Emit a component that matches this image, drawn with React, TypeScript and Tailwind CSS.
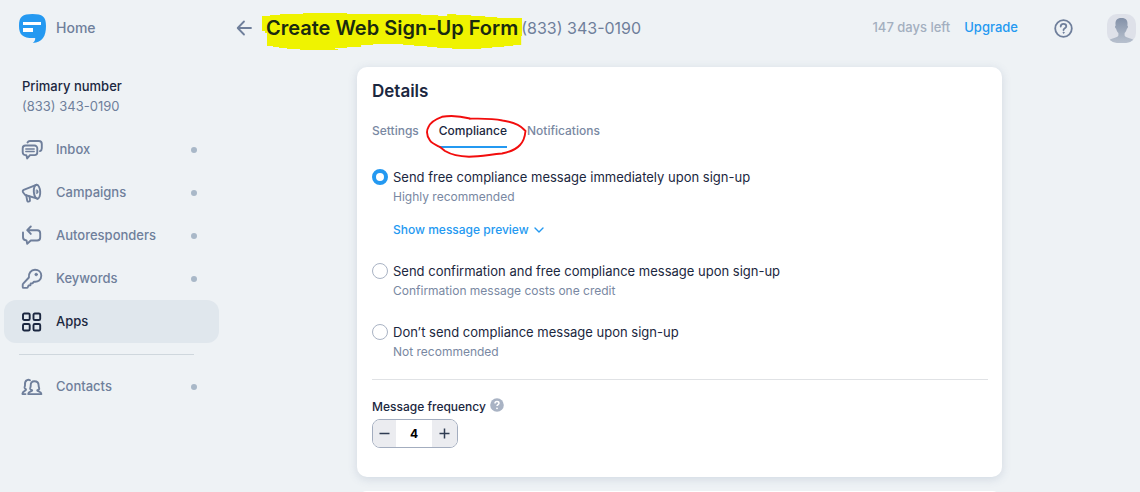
import { useState } from "react";
import type { ReactNode } from "react";

function Icon({ children }: { children: ReactNode }) {
  return (
    <svg
      viewBox="0 0 24 24"
      className="size-6 shrink-0"
      fill="none"
      stroke="currentColor"
      strokeWidth="1.9"
      strokeLinecap="round"
      strokeLinejoin="round"
      aria-hidden="true"
    >
      {children}
    </svg>
  );
}

const icons = {
  inbox: (
    <Icon>
      <path d="M5.5 7.5h9a2.800 2.800 0 0 1 2.800 2.800v4a2.800 2.800 0 0 1-2.800 2.800H10l-2.800 3.400-.9-3.400h-.8a2.800 2.800 0 0 1-2.800-2.800v-4a2.800 2.800 0 0 1 2.800-2.800Z" />
      <path d="M5.800 11h8.400M5.800 13.500h8.400" strokeWidth="1.400" />
      <path d="M7.500 4.500C8 3.500 8.900 3 10 3h8.800a3 3 0 0 1 3 3v4.200c0 1.500-.7 2.500-1.800 2.900" />
    </Icon>
  ),
  campaigns: (
    <Icon>
      <ellipse cx="17" cy="10.700" rx="3.200" ry="7" transform="rotate(-4 17 10.700)" />
      <path d="M16.300 3.800 3.700 8.800c-1.100.5-1.200 1.800-.5 2.700l2 2.500 12.300 3.700" />
      <path d="m6.200 14.300 1 5.300c.2 1 .9 1.200 1.700 1 .9-.2 1.300-.8 1.100-1.700l-.6-3.500" />
      <path d="M16.500 8.800c1.200 0 1.700.8 1.700 1.900s-.5 1.900-1.700 1.900Z" fill="currentColor" strokeWidth="0.600" />
    </Icon>
  ),
  autoresponders: (
    <Icon>
      <path d="M10.800 2.500 7.200 6.200l3.600 3.700M7.500 6.200h9.700a3 3 0 0 1 3 3v4.300a3 3 0 0 1-3 3h-6.400l-3.600 3.300-.7-3.400C4.300 16.300 3 15.300 3 13.300V8.500" />
    </Icon>
  ),
  keywords: (
    <Icon>
      <path d="M8.900 10.500C8.300 6.200 11 2.800 15 2.800c3.700 0 6.300 2.600 6.300 6 0 4-3.300 6.400-7.300 5.800l-1.300 1.600-2 .2-.3 2-1.900.1-.6 1.500c-.2.700-.6.900-1.200.9H3.600c-.7 0-.9-.4-.9-1v-2c0-.5.100-.8.500-1.200Z" />
      <circle cx="16.200" cy="7.500" r="1.300" fill="currentColor" strokeWidth="0.800" />
    </Icon>
  ),
  apps: (
    <Icon>
      <rect x="3" y="3.500" width="6.700" height="6.500" rx="1.300" />
      <rect x="13.500" y="3.500" width="6.700" height="6.500" rx="1.300" />
      <rect x="3" y="14" width="6.700" height="6.500" rx="1.300" />
      <rect x="13.500" y="14" width="6.700" height="6.500" rx="1.300" />
    </Icon>
  ),
  contacts: (
    <Icon>
      <path d="M10 5.200C9 4.600 8 4.600 7 5.100 5 6 4.800 8 5 10c.1 1.400-.8 2.100-.3 3.100.5.900 1.300.7 1.300 1.600 0 1.200-3.200 1.200-3.500 3.700v.700h3" />
      <path d="M14.300 6.200c-2.400 0-3.700 1.600-3.600 4 .1 1.900-.8 2.800-.5 3.800.3.900 2 .7 2 1.400 0 1.200-4 1.100-4 3.700h13.200c0-2.600-4.200-2.500-4.200-3.700 0-.7 1.600-.5 2-1.400.3-1-.6-1.900-.6-3.800 0-2.400-1.800-4-4.300-4Z" />
    </Icon>
  ),
};

const navItems = [
  { label: "Inbox", icon: icons.inbox },
  { label: "Campaigns", icon: icons.campaigns },
  { label: "Autoresponders", icon: icons.autoresponders },
  { label: "Keywords", icon: icons.keywords },
  { label: "Apps", icon: icons.apps, active: true },
];

function NavItem({ label, icon, active }: { label: string; icon: ReactNode; active?: boolean }) {
  return (
    <a
      href="#"
      aria-current={active ? "page" : undefined}
      className={
        active
          ? "flex h-[43px] items-center gap-3 rounded-xl bg-[#e0e7ed] pr-[22px] pl-4 text-[13px] font-medium text-[#1b2740]"
          : "flex h-[43px] items-center gap-3 rounded-xl pr-[22px] pl-4 text-[13px] font-medium text-[#6f7f9b]"
      }
    >
      {icon}
      <span className="flex-1">{label}</span>
      {!active && <span className="size-[6px] rounded-full bg-[#a9b8c8]" />}
    </a>
  );
}

function Logo() {
  return (
    <svg viewBox="0 0 27 29" className="h-[29px] w-[27px] shrink-0" aria-hidden="true">
      <path
        d="M13.500 0C23.500 0 27 2.500 27 12c0 10-3.500 16.500-13.300 17 1.900-1.300 2.600-2.900 2.500-5C4.500 24.500 0 21.500 0 12 0 2.500 3.500 0 13.500 0Z"
        fill="#2499f1"
      />
      <path d="M4 8h18v3H4zM4 14h10v4H4z" fill="#fff" />
    </svg>
  );
}

function Sidebar() {
  return (
    <aside className="w-[219px] shrink-0 pl-1">
      <a href="#" className="flex h-14 items-center gap-[10px] pl-[15px] text-sm font-medium text-[#6f7f9b]">
        <Logo />
        Home
      </a>
      <div className="mt-5 pl-[18px] text-[13px] leading-5">
        <p className="font-medium text-[#1b2740]">Primary number</p>
        <p className="text-[#6f7f9b]">(833) 343-0190</p>
      </div>
      <nav aria-label="Main" className="mt-3">
        {navItems.map((item) => (
          <NavItem key={item.label} {...item} />
        ))}
        <hr className="mt-[11px] mr-[25px] mb-[10px] ml-[15px] border-[#cfd7dd]" />
        <NavItem label="Contacts" icon={icons.contacts} />
      </nav>
    </aside>
  );
}

function Header() {
  return (
    <header className="flex h-14 items-center justify-between pr-1 pl-[17px]">
      <div className="flex items-center">
        <button type="button" aria-label="Back" className="mr-[14px] text-[#6f7f9b]">
          <svg viewBox="0 0 16 16" className="size-4" fill="none" stroke="currentColor" strokeWidth="1.800" strokeLinecap="round" strokeLinejoin="round">
            <path d="M8 1.500 1.700 8 8 14.500M2 8h13" />
          </svg>
        </button>
        <h1 className="relative isolate mr-[3px] text-xl leading-7 font-semibold whitespace-nowrap text-[#1a2a10]">
          <svg
            viewBox="0 0 260 37"
            preserveAspectRatio="none"
            className="absolute -top-px -right-1 -left-1 -z-10 h-[37px] w-[calc(100%+8px)]"
            aria-hidden="true"
          >
            <path
              d="M0 3h8V2h10V1h23V0h44v1h74v1h17v1h9V1h9v1h15v1h14v1h12v1h25v18h-1v9h-8v1h-9v1h-12v1h-11v1h-29v-1h-15v-1h-10v-1h-13v-1h-11v-1h-30v1h-12v2h-14v1h-12v1H76v1H38v-1H25v-1h-8v-1h-6v-1H5V20H3v-2H0Z"
              fill="#eff300"
            />
          </svg>
          Create Web Sign-Up Form
        </h1>
        <span className="text-base whitespace-nowrap text-[#6f7f9b]">(833) 343-0190</span>
      </div>
      <div className="flex items-center text-[13px] font-medium">
        <span className="mr-[14px] text-[#a3afbf]">147 days left</span>
        <a href="#" className="mr-9 text-[#2499f1]">
          Upgrade
        </a>
        <button type="button" aria-label="Help" className="mr-[34px] text-[#6f7f9b]">
          <svg viewBox="0 0 19 19" className="size-[19px]" fill="none" stroke="currentColor" strokeWidth="1.800" strokeLinecap="round">
            <circle cx="9.500" cy="9.500" r="8.300" />
            <path d="M6.700 7.600c0-1.700 1.200-2.700 2.800-2.700s2.800.9 2.800 2.400c0 1.900-2.800 1.900-2.800 3.700" />
            <circle cx="9.500" cy="13.700" r="0.500" fill="currentColor" strokeWidth="1" />
          </svg>
        </button>
        <button type="button" aria-label="Account" className="overflow-hidden rounded-[10px] bg-[#dee1e9]">
          <svg viewBox="0 0 29 29" className="size-[29px]">
            <defs>
              <linearGradient id="avatar" x1="0" y1="0" x2="0" y2="1">
                <stop offset="0" stopColor="#8391a8" />
                <stop offset="1" stopColor="#b8c1ce" />
              </linearGradient>
            </defs>
            <path
              d="M14.500 4c4.800 0 6.200 2.500 6 6.500l-.2 1c1 .2.900 2.500-.4 3.300-.4 2-1.300 3.200-2.300 4.200v2.300c0 2.200 6.300 2.700 9 4.700V29H2.400v-3c2.700-2 9-2.500 9-4.700V19c-1-1-1.900-2.200-2.300-4.200-1.300-.8-1.400-3.100-.4-3.300l-.2-1C8.300 6.500 9.700 4 14.500 4Z"
              fill="url(#avatar)"
            />
          </svg>
        </button>
      </div>
    </header>
  );
}

const tabs = ["Settings", "Compliance", "Notifications"];

function Tabs() {
  return (
    <div role="tablist" className="mt-5 flex gap-5 text-xs leading-4 font-medium">
      {tabs.map((tab) =>
        tab === "Compliance" ? (
          <button
            key={tab}
            type="button"
            role="tab"
            aria-selected="true"
            className="relative border-b-2 border-[#2499f1] pb-[7px] text-[#1b2740]"
          >
            {tab}
            <svg
              viewBox="0 0 101 44"
              className="absolute -top-[9px] -left-[13px] h-[44px] w-[101px] max-w-none"
              fill="none"
              stroke="#f20d0d"
              strokeWidth="1.900"
              strokeLinejoin="round"
              aria-hidden="true"
            >
              <path d="M44 4.500C35 2.200 24 1.300 16 2.800 10 5 4 9 2.500 13 0 17 1 22 4 26.500c2 3 6 4.500 10 6.500l5 4c6 3.500 15 5.500 24 5.700 12-.2 20-2 33-3.200 8-1.500 14-4 18-8.500 3-3 5-9 5.500-14l-1-1c-4-4.500-12-8-22-9.500C65 4 54 4.500 43 4.700" />
            </svg>
          </button>
        ) : (
          <button
            key={tab}
            type="button"
            role="tab"
            aria-selected="false"
            className="border-b-2 border-transparent pb-[7px] text-[#7988a2]"
          >
            {tab}
          </button>
        )
      )}
    </div>
  );
}

const options = [
  {
    id: "immediate",
    label: "Send free compliance message immediately upon sign-up",
    note: "Highly recommended",
    preview: true,
  },
  {
    id: "confirm",
    label: "Send confirmation and free compliance message upon sign-up",
    note: "Confirmation message costs one credit",
  },
  { id: "none", label: "Don’t send compliance message upon sign-up", note: "Not recommended" },
];

export default function App() {
  const [choice, setChoice] = useState("immediate");
  const [frequency, setFrequency] = useState(4);

  return (
    <div className="flex h-screen overflow-hidden bg-[#eef2f5] font-['Inter',sans-serif] text-[#1b2740]">
      <Sidebar />
      <div className="min-w-0 flex-1">
        <Header />
        <main className="mx-auto mt-[11px] max-w-[645px]">
          <section className="rounded-[10px] bg-white pt-3 pr-[14px] pb-[29px] pl-[15px] shadow-[0_2px_10px_rgba(80,100,140,0.18)]">
            <h2 className="text-[17px] leading-6 font-semibold">Details</h2>
            <Tabs />
            <fieldset aria-label="Compliance message" className="mt-[19px] flex flex-col gap-[23px]">
              {options.map((o) => (
                <div key={o.id} className="flex gap-[5px]">
                  <input
                    id={o.id}
                    type="radio"
                    name="compliance"
                    checked={choice === o.id}
                    onChange={() => setChoice(o.id)}
                    className="mt-[2px] size-4 shrink-0 appearance-none rounded-full border border-[#a9b3c4] bg-white checked:border-[4px] checked:border-[#2499f1]"
                  />
                  <div>
                    <label htmlFor={o.id} className="block text-[13px] leading-5">
                      {o.label}
                    </label>
                    <p className="mt-[2px] text-xs leading-4 text-[#7988a2]">{o.note}</p>
                    {o.preview && (
                      <button type="button" className="mt-[17px] flex items-center gap-[5px] text-xs leading-4 font-medium text-[#2499f1]">
                        Show message preview
                        <svg viewBox="0 0 10 6" className="h-[6px] w-[10px]" fill="none" stroke="currentColor" strokeWidth="1.400" strokeLinecap="round" strokeLinejoin="round">
                          <path d="m1 1 4 4 4-4" />
                        </svg>
                      </button>
                    )}
                  </div>
                </div>
              ))}
            </fieldset>
            <hr className="mt-[19px] border-[#e0e2e5]" />
            <div className="mt-[19px] flex items-center gap-1">
              <label htmlFor="frequency" className="text-xs leading-4 font-medium">
                Message frequency
              </label>
              <button type="button" aria-label="About message frequency" className="-mt-1 text-[#a9b3c4]">
                <svg viewBox="0 0 14 14" className="size-[14px]">
                  <circle cx="7" cy="7" r="6.800" fill="currentColor" />
                  <path d="M5 5.400C5 4.200 5.800 3.500 7 3.500s2 .7 2 1.700c0 1.400-2 1.400-2 2.900" fill="none" stroke="#fff" strokeWidth="1.500" />
                  <circle cx="7" cy="10.300" r="0.900" fill="#fff" />
                </svg>
              </button>
            </div>
            <div className="mt-1 flex h-[29px] w-[86px] overflow-hidden rounded-lg border border-[#a3adbf] bg-white">
              <button
                type="button"
                aria-label="Decrease"
                onClick={() => setFrequency((f) => Math.max(1, f - 1))}
                className="flex w-[23px] shrink-0 items-center justify-center bg-[#ebecf0] text-[#2f3c52]"
              >
                <svg viewBox="0 0 11 11" className="size-[11px]" stroke="currentColor" strokeWidth="1.500">
                  <path d="M0.500 5.500h10" />
                </svg>
              </button>
              <input
                id="frequency"
                type="text"
                inputMode="numeric"
                value={frequency}
                onChange={(e) => setFrequency(Number(e.target.value) || 0)}
                className="w-0 min-w-0 flex-1 bg-white text-center text-xs font-bold text-black outline-none"
              />
              <button
                type="button"
                aria-label="Increase"
                onClick={() => setFrequency((f) => f + 1)}
                className="flex w-[25px] shrink-0 items-center justify-center bg-[#ebecf0] text-[#2f3c52]"
              >
                <svg viewBox="0 0 11 11" className="size-[11px]" stroke="currentColor" strokeWidth="1.500">
                  <path d="M5.500 0.500v10M0.500 5.500h10" />
                </svg>
              </button>
            </div>
          </section>
          <section aria-hidden="true" className="mt-[14px] h-10 rounded-[10px] bg-white" />
        </main>
      </div>
    </div>
  );
}
